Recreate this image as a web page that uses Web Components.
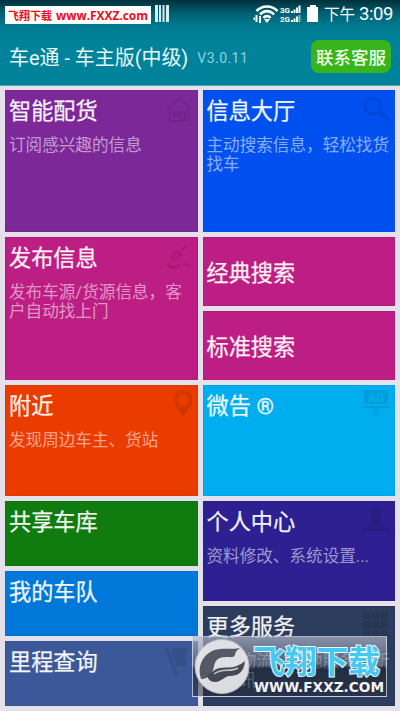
<!DOCTYPE html>
<html lang="zh-CN">
<head>
<meta charset="UTF-8">
<meta name="viewport" content="width=device-width, initial-scale=1.0">
<title>车e通</title>
<style>
  body {
    margin: 0;
    width: 400px;
    height: 711px;
    overflow: hidden;
    background: #e4e1ea;
    font-family: Roboto, "Noto Sans CJK SC", sans-serif;
  }
</style>
</head>
<body>
<home-screen></home-screen>

<script>
  // 磁贴右上角的暗色图标
  const ICONS = {
    house: '<path d="M2 14 14 3l12 11M5 13v13h18V13M9 17h4v4H9zM16 26v-9h4v9" fill="none" stroke="#000" stroke-width="2"/>',
    search: '<circle cx="11" cy="11" r="8" fill="none" stroke="#000" stroke-width="3"/><path d="m17 17 10 9" stroke="#000" stroke-width="4"/>',
    route: '<path d="M7 17c0-4 2-7 5-7s4 3 2 5-4 3-7 2M17 8l5-5M2 22c3 5 8 4 14 1M18 22l8 2" fill="none" stroke="#000" stroke-width="2.800"/>',
    pin: '<path fill-rule="evenodd" d="M18 0a9.500 9.500 0 0 0-9.500 9.500C8.500 16 14 20 18 27c4-7 9.500-11 9.500-17.500A9.500 9.500 0 0 0 18 0m0 4a6 6 0 1 1 0 12 6 6 0 0 1 0-12"/>',
    ad: '<path d="M2 0h24v14H2zM1 16h26v2.500H1zM12.500 20h3v8h-3z"/><text x="14" y="11.500" text-anchor="middle" font-size="12" font-weight="700" fill="#00aeef">AD</text>',
    user: '<path d="M14 2c5 0 7 3 6 8-.5 3-2 4-2 7 4 2 10 2 10 8H0c0-6 6-6 10-8 0-3-1.500-4-2-7-1-5 1-8 6-8"/>',
    flag: '<path d="m0 2 3-1 10 28-3 1zM6 3c6-3 10 1 18-2l-4 10 2 9c-5 1-8-1-11 1z"/>',
    grid: '<path d="M1 1h7v7H1zM10 1h7v7h-7zM19 1h7v7h-7zM1 10h7v7H1zM10 10h7v7h-7zM19 10h7v7h-7zM1 19h7v7H1zM10 19h7v7h-7zM19 19h7v7h-7z"/>'
  };

  // 状态栏
  class StatusBar extends HTMLElement {
    constructor() {
      super();
      this.attachShadow({ mode: 'open' }).innerHTML = `
        <style>
          :host { display: flex; align-items: flex-start; height: 30px; padding: 0 7px 0 5px; color: #fff; }
          .site {
            margin-top: 6px; width: 146px; height: 18px; background: #fff; color: #e60f1c;
            display: flex; align-items: center; justify-content: center; gap: 4px; white-space: nowrap;
            font: 700 11px "Noto Sans CJK SC", sans-serif;
          }
          .site b { font: 700 12px "Open Sans", sans-serif; letter-spacing: -.05px; }
          .bars { margin: 5px 0 0 4px; }
          .signal { margin: 5px 0 0 auto; }
          .time { margin-left: 5px; font-size: 15.500px; line-height: 28px; white-space: nowrap; }
          .time span { font-size: 18.500px; letter-spacing: -.4px; }
        </style>
        <div class="site"><span>飞翔下载</span><b>www.FXXZ.com</b></div>
        <svg class="bars" width="14" height="18"><path d="M0 0h3v17H0zM4 0h2v17H4zM7.500 0h2v17h-2zM11 0h3v17h-3z" fill="#d5edf1"/></svg>
        <svg class="signal" width="66" height="20" fill="#fff" stroke="none">
          <g fill="none" stroke="#fff" stroke-width="2.600">
            <path d="M3.500 6c6-6 15-6 21 0M7 9.500c4-4.500 10-4.500 14 0M10.500 13c2-2.500 5-2.500 7 0"/>
          </g>
          <path d="m14 18-3-4h6zM2.500 10h2v7h-2zM6 11h2v7H6zM.5 12.500H2V15H.5z"/>
          <text x="27" y="8" font-size="8" font-weight="700" textLength="10">3G</text>
          <text x="27" y="17" font-size="8" font-weight="700" textLength="10">2G</text>
          <path d="M38 6h2v2h-2zM40.500 4.500h2V8h-2zM43 2.500h2V8h-2zM45.500.5h2V8h-2zM38 15h2v2h-2zM40.500 13.500h2V17h-2zM43 11.500h2V17h-2z"/>
          <path d="M45.500 10h2v7h-2z" opacity=".5"/>
          <path d="M57 0h6v2h2v15H54V2h3z"/>
        </svg>
        <div class="time">下午 <span>3:09</span></div>`;
    }
  }
  customElements.define('status-bar', StatusBar);

  // 标题栏
  class TitleBar extends HTMLElement {
    constructor() {
      super();
      this.attachShadow({ mode: 'open' }).innerHTML = `
        <style>
          :host { display: flex; align-items: center; height: 53px; padding: 0 9px; color: #e6f9fc; white-space: nowrap; }
          h1 { margin: 0; font-size: 19.950px; font-weight: 400; }
          .ver { margin: 3px 0 0 9px; font-size: 14px; color: #8ed3df; letter-spacing: .45px; }
          button {
            margin: 0 0 1px auto; padding: 0; width: 80px; height: 33px; border: 0; border-radius: 8px;
            background: #36b51c; color: #f0ffe9; font: 500 17.500px "Noto Sans CJK SC", sans-serif;
          }
        </style>
        <h1><slot></slot></h1>
        <span class="ver">${this.getAttribute('version')}</span>
        <button>联系客服</button>`;
    }
  }
  customElements.define('title-bar', TitleBar);

  // 磁贴
  class MetroTile extends HTMLElement {
    constructor() {
      super();
      const icon = ICONS[this.getAttribute('icon')] || '';
      this.attachShadow({ mode: 'open' }).innerHTML = `
        <style>
          :host { display: flex; position: relative; flex-direction: column; box-sizing: border-box; padding: 5px 4px 0; color: #fff; box-shadow: inset 0 0 1px rgba(0,0,0,.5); }
          :host([middle]) { justify-content: center; padding: 2px 4px 0; }
          h2 { margin: 0; font-size: 22.200px; line-height: 32px; font-weight: 400; opacity: .94; white-space: nowrap; -webkit-text-stroke: .25px #fff; }
          p { margin: 9px 0 0; font-size: 16.600px; line-height: 19px; color: rgba(255,255,255,.55); }
          svg { position: absolute; right: 5px; top: 5px; opacity: .09; }
        </style>
        ${icon && `<svg width="28" height="31">${icon}</svg>`}
        <h2><slot></slot></h2>
        ${this.hasAttribute('desc') ? `<p>${this.getAttribute('desc')}</p>` : ''}`;
    }
  }
  customElements.define('metro-tile', MetroTile);

  // 右下角站点标识
  class SiteBadge extends HTMLElement {
    constructor() {
      super();
      this.attachShadow({ mode: 'open' }).innerHTML = `
        <style>
          :host {
            display: flex; position: absolute; left: 192px; top: 636px; width: 195px; height: 61px; box-sizing: border-box;
            border: 1px solid rgba(220,225,240,.75);
            background: linear-gradient(rgba(178,184,204,.68), rgba(105,112,130,.6) 48%, rgba(30,35,48,.6) 52%, rgba(35,40,55,.5));
          }
          .logo { margin: 1px 0 0 1px; flex: none; }
          .text { margin-left: 2px; }
        </style>
        <svg class="logo" width="56" height="57" viewBox="0 0 56 57">
          <circle cx="28" cy="28.500" r="27" fill="#e5e6e9" fill-opacity=".95" stroke="#b8bac2"/>
          <path d="M7 41C3 29 8 18 18 13c9-4 18-1 28-3-3 2-5 4-5 7-1 3-5 2-9 2-7 0-11 3-12 9-1 7-5 13-13 13" fill="#555963"/>
          <path d="M13 37c5-1 6-6 13-7 8-1 16 1 25-7-1 12-8 15-15 15-6 0-8 6-15 6-5 0-7-3-8-7" fill="#444954"/>
          <path d="M20 36c9-7 15-1 24-6" fill="none" stroke="#c5c7cd" stroke-width="1.500"/>
        </svg>
        <svg class="text" width="134" height="58">
          <text x="1" y="36" textLength="127" lengthAdjust="spacingAndGlyphs" font-family="Noto Sans CJK SC, sans-serif" font-size="32" font-weight="700" fill="#45c8f1" stroke="#e9fbff" stroke-width="2" paint-order="stroke">飞翔下载</text>
          <text x="2" y="55" textLength="130" lengthAdjust="spacingAndGlyphs" font-family="DejaVu Sans, sans-serif" font-size="13.500" font-weight="700" fill="#f4f5f7">WWW.FXXZ.COM</text>
        </svg>`;
    }
  }
  customElements.define('site-badge', SiteBadge);

  // 首页
  class HomeScreen extends HTMLElement {
    constructor() {
      super();
      this.attachShadow({ mode: 'open' }).innerHTML = `
        <style>
          :host { display: block; position: relative; height: 711px; }
          header { height: 85px; background: linear-gradient(#00303a, #005c6d 12px, #007a90 26px, #00829a 40px); border-bottom: 1px solid #4fa3b3; }
          main { display: flex; gap: 5px; padding: 4px 5px 0; }
          .col { display: flex; flex: 1; min-width: 0; flex-direction: column; gap: 5px; }
        </style>
        <header>
          <status-bar></status-bar>
          <title-bar version="V3.0.11">车e通 - 车主版(中级)</title-bar>
        </header>
        <main>
          <div class="col">
            <metro-tile style="height:142px;background:#7d2899" icon="house" desc="订阅感兴趣的信息">智能配货</metro-tile>
            <metro-tile style="height:143px;background:#bd1e83" icon="route" desc="发布车源/货源信息，客户自动找上门">发布信息</metro-tile>
            <metro-tile style="height:111px;background:#eb3c00" icon="pin" desc="发现周边车主、货站">附近</metro-tile>
            <metro-tile style="height:65px;background:#107c10">共享车库</metro-tile>
            <metro-tile style="height:65px;background:#0078d9">我的车队</metro-tile>
            <metro-tile style="height:65px;background:#3b5998" icon="flag">里程查询</metro-tile>
          </div>
          <div class="col">
            <metro-tile style="height:142px;background:#0050ef" icon="search" desc="主动搜索信息，轻松找货找车">信息大厅</metro-tile>
            <metro-tile style="height:69px;background:#bd1e83" middle>经典搜索</metro-tile>
            <metro-tile style="height:69px;background:#bd1e83" middle>标准搜索</metro-tile>
            <metro-tile style="height:111px;background:#00aeef" icon="ad">微告 ®</metro-tile>
            <metro-tile style="height:100px;background:#2e2092" icon="user" desc="资料修改、系统设置...">个人中心</metro-tile>
            <metro-tile style="height:100px;background:#2c3c5c" icon="grid" desc="以及物流、本地服务、新闻资讯">更多服务</metro-tile>
          </div>
        </main>
        <site-badge></site-badge>`;
    }
  }
  customElements.define('home-screen', HomeScreen);
</script>
</body>
</html>
